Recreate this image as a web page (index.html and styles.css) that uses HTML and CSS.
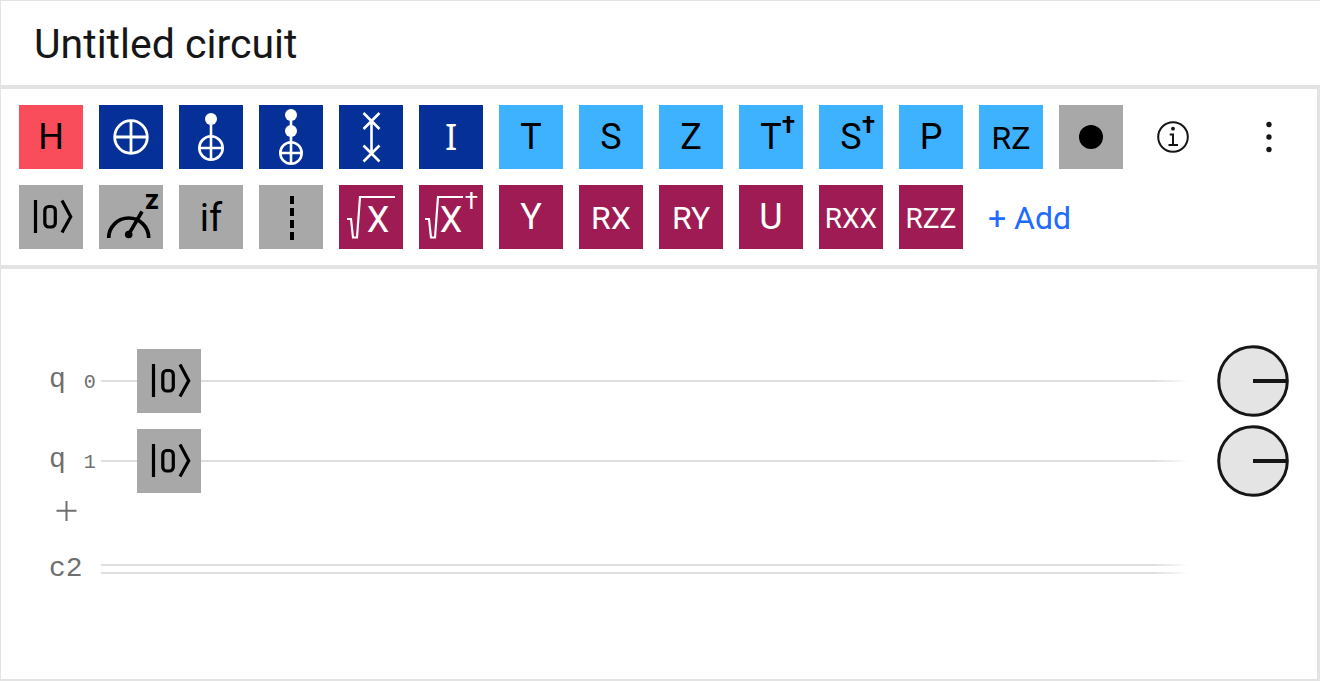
FILE: index.html
```html
<!DOCTYPE html>
<html lang="en">
<head>
<meta charset="utf-8">
<title>Untitled circuit</title>
<link rel="stylesheet" href="styles.css">
</head>
<body>
<main class="composer">
  <header class="titlebar"><h1 class="title">Untitled circuit</h1></header>

  <div class="workspace">
  <section class="toolbar" aria-label="Operations">
    <div class="palette">
      <button class="gate red">H</button>
      <button class="gate navy" aria-label="NOT"><svg class="glyph" viewBox="0 0 64 64"><g fill="none" stroke="currentColor" stroke-width="2.8"><circle cx="32" cy="32" r="16.3"/><path d="M32 16v32M16 32h32"/></g></svg></button>
      <button class="gate navy" aria-label="CNOT"><svg class="glyph" viewBox="0 0 64 64"><g fill="none" stroke="currentColor" stroke-width="2.6"><circle cx="32" cy="43" r="11.7"/><path d="M32 14v41M20 43h24"/></g><circle cx="32" cy="14" r="6" fill="currentColor"/></svg></button>
      <button class="gate navy" aria-label="Toffoli"><svg class="glyph" viewBox="0 0 64 64"><g fill="none" stroke="currentColor" stroke-width="2.6"><circle cx="32" cy="48" r="10.7"/><path d="M32 10v49M21 48h22"/></g><g fill="currentColor"><circle cx="32" cy="10" r="6"/><circle cx="32" cy="26" r="6"/></g></svg></button>
      <button class="gate navy" aria-label="SWAP"><svg class="glyph" viewBox="0 0 64 64"><path d="M24.500 8l16 16M40.500 8l-16 16M24.500 40.500l16 16M40.500 40.500l-16 16M32.500 16v32" fill="none" stroke="currentColor" stroke-width="2.600"/></svg></button>
      <button class="gate navy identity">I</button>
      <button class="gate sky">T</button>
      <button class="gate sky">S</button>
      <button class="gate sky">Z</button>
      <button class="gate sky">T<sup class="dagger">†</sup></button>
      <button class="gate sky">S<sup class="dagger">†</sup></button>
      <button class="gate sky">P</button>
      <button class="gate sky pair">RZ</button>
      <button class="gate gray" aria-label="Control"><svg class="glyph" viewBox="0 0 64 64"><circle cx="32" cy="32" r="12" fill="currentColor"/></svg></button>
      <button class="gate gray" aria-label="Reset"><svg class="glyph" viewBox="0 0 64 64"><g fill="none" stroke="currentColor" stroke-width="3.200"><path d="M16.500 15v33M43 15.500l8.700 16.200L43 47.500"/><rect x="25.800" y="21.500" width="10.500" height="20.500" rx="4"/></g></svg></button>
      <button class="gate gray" aria-label="Measure"><svg class="glyph" viewBox="0 0 64 64"><path d="M9.700 53a20 20 0 0 1 40 0M29.700 49.300L43 26.500" fill="none" stroke="currentColor" stroke-width="3.600"/><circle cx="29.700" cy="49.500" r="3.800" fill="currentColor"/><text class="basis" x="53" y="24">Z</text></svg></button>
      <button class="gate gray condition">if</button>
      <button class="gate gray" aria-label="Barrier"><svg class="glyph" viewBox="0 0 64 64"><path d="M33 11v44" fill="none" stroke="currentColor" stroke-width="4" stroke-dasharray="8 4"/></svg></button>
      <button class="gate plum" aria-label="Square root of X"><svg class="glyph" viewBox="0 0 64 64"><path d="M8 34h4l2 18.500h4L21 12h35" fill="none" stroke="currentColor" stroke-width="2.200"/><text class="radicand" x="39" y="47">X</text></svg></button>
      <button class="gate plum" aria-label="Square root of X dagger"><svg class="glyph" viewBox="0 0 64 64"><path d="M6 34h4l2 18.500h4L19 12h25" fill="none" stroke="currentColor" stroke-width="2.200"/><text class="radicand" x="32" y="47">X</text></svg><sup class="dagger light">†</sup></button>
      <button class="gate plum">Y</button>
      <button class="gate plum pair">RX</button>
      <button class="gate plum pair">RY</button>
      <button class="gate plum">U</button>
      <button class="gate plum triple">RXX</button>
      <button class="gate plum triple">RZZ</button>
      <button class="add">+ Add</button>
    </div>
    <div class="actions">
      <button class="action" aria-label="Information"><svg class="icon" viewBox="0 0 32 32"><g fill="none" stroke="currentColor" stroke-width="2"><circle cx="16" cy="16" r="14.800"/><path d="M12.700 13.500H16v10.500M11.500 24H21"/></g><circle cx="16" cy="7.700" r="1.900" fill="currentColor"/></svg></button>
      <button class="action" aria-label="More options"><svg class="icon" viewBox="0 0 32 32"><g fill="currentColor"><circle cx="16" cy="3.500" r="2.700"/><circle cx="16" cy="16" r="2.700"/><circle cx="16" cy="28.500" r="2.700"/></g></svg></button>
    </div>
  </section>

  <section class="canvas" aria-label="Circuit">
    <div class="register">
      <div class="label"><span class="name">q</span><span class="index">0</span></div>
      <div class="wire"><button class="gate gray" aria-label="Reset"><svg class="glyph" viewBox="0 0 64 64"><g fill="none" stroke="currentColor" stroke-width="3.200"><path d="M16.500 15v33M43 15.500l8.700 16.200L43 47.500"/><rect x="25.800" y="21.500" width="10.500" height="20.500" rx="4"/></g></svg></button></div>
      <svg class="disk" viewBox="0 0 72 72"><circle cx="36" cy="36" r="34.300"/><path d="M36 36h34"/></svg>
    </div>
    <div class="register">
      <div class="label"><span class="name">q</span><span class="index">1</span></div>
      <div class="wire"><button class="gate gray" aria-label="Reset"><svg class="glyph" viewBox="0 0 64 64"><g fill="none" stroke="currentColor" stroke-width="3.200"><path d="M16.500 15v33M43 15.500l8.700 16.200L43 47.500"/><rect x="25.800" y="21.500" width="10.500" height="20.500" rx="4"/></g></svg></button></div>
      <svg class="disk" viewBox="0 0 72 72"><circle cx="36" cy="36" r="34.300"/><path d="M36 36h34"/></svg>
    </div>
    <button class="add-register" aria-label="Add qubit"><svg class="plus" viewBox="0 0 28 28"><path d="M13.500 4v20M3.500 13.700h20" fill="none" stroke="currentColor" stroke-width="2"/></svg></button>
    <div class="register">
      <div class="label"><span class="name bits">c2</span></div>
      <div class="wire classical"></div>
    </div>
  </section>
  </div>
</main>
</body>
</html>
```

FILE: styles.css
```css
* { box-sizing: border-box; }

body {
  margin: 0;
  background: #fff;
  color: #161616;
  font-family: Roboto, "Noto Sans", sans-serif;
}

button {
  margin: 0;
  padding: 0;
  border: 0;
  background: none;
  color: inherit;
  font: inherit;
  cursor: pointer;
}

.composer {
  display: flex;
  flex-direction: column;
  min-height: 100vh;
  border: 1px solid #e3e3e3;
  border-right: 0;
  border-bottom-width: 2px;
}

.titlebar {
  padding: 17px 33px 15px;
  border-bottom: 4px solid #e3e3e3;
}

.title {
  margin: 0;
  font-size: 41px;
  font-weight: 400;
  line-height: 52px;
}

.workspace {
  flex: 1;
  border-right: 3px solid #e3e3e3;
}

.toolbar {
  display: flex;
  align-items: flex-start;
  padding: 16px 16px 16px 18px;
  border-bottom: 4px solid #e3e3e3;
}

.palette {
  display: flex;
  flex: 1;
  flex-wrap: wrap;
  gap: 16px;
}

.gate {
  position: relative;
  flex: none;
  width: 64px;
  height: 64px;
  font-size: 36px;
  line-height: 64px;
  text-align: center;
}

.red { background: #fa4d5b; color: #000; }
.navy { background: #053097; color: #fff; }
.sky { background: #3eb1ff; color: #000; }
.gray { background: #a8a8a8; color: #000; }
.plum { background: #9e1c53; color: #fff; }

.pair { padding-top: 2px; font-size: 32px; line-height: 62px; }
.triple { padding-top: 4px; font-size: 28px; line-height: 60px; }
.condition { padding-top: 2px; line-height: 62px; font-size: 38px; }
.identity { font-family: "Noto Sans", sans-serif; line-height: 62px; }

.glyph { display: block; width: 64px; height: 64px; }
.glyph text { fill: currentColor; text-anchor: middle; }
.basis { font: 900 20px Inter, sans-serif; }
.radicand { font-size: 36px; }

.dagger {
  position: absolute;
  top: 8px;
  right: 8px;
  font-size: 24px;
  font-weight: 700;
  line-height: 24px;
}

.light { top: 4px; right: 5px; font-weight: 400; }

.add {
  height: 64px;
  padding: 2px 9px 0;
  color: #1f6bff;
  font-size: 32px;
}

.actions { display: flex; gap: 32px; }

.action {
  display: grid;
  place-items: center;
  width: 64px;
  height: 64px;
}

.icon { width: 32px; height: 32px; }

.canvas { padding-top: 76px; }

.register {
  display: grid;
  grid-template-columns: 100px 1fr 72px;
  height: 72px;
  padding-right: 28px;
}

.register + .register { margin-top: 8px; }

.label {
  display: flex;
  align-items: center;
  padding-left: 48px;
  color: #6f6f6f;
  font-family: "Liberation Mono", monospace;
}

.name { padding-bottom: 4px; font-size: 28px; }
.bits { padding-bottom: 2px; }
.index { padding-top: 2px; margin-left: 18px; font-size: 20px; }

.wire {
  display: flex;
  align-items: center;
  margin-right: 28px;
  padding-left: 36px;
  background: linear-gradient(to right, #dedede calc(100% - 36px), transparent) center / 100% 2px no-repeat;
}

.classical {
  height: 10px;
  align-self: center;
  background-image: linear-gradient(to right, #dedede calc(100% - 36px), transparent), linear-gradient(to right, #dedede calc(100% - 36px), transparent);
  background-position: top, bottom;
}

.disk {
  width: 72px;
  height: 72px;
  fill: #e4e4e4;
  stroke: #161616;
  stroke-width: 3;
}

.disk path { stroke-width: 4; }

.add-register {
  display: block;
  margin: 0 0 8px 52px;
  color: #6f6f6f;
}

.plus { display: block; width: 28px; height: 28px; }
```
